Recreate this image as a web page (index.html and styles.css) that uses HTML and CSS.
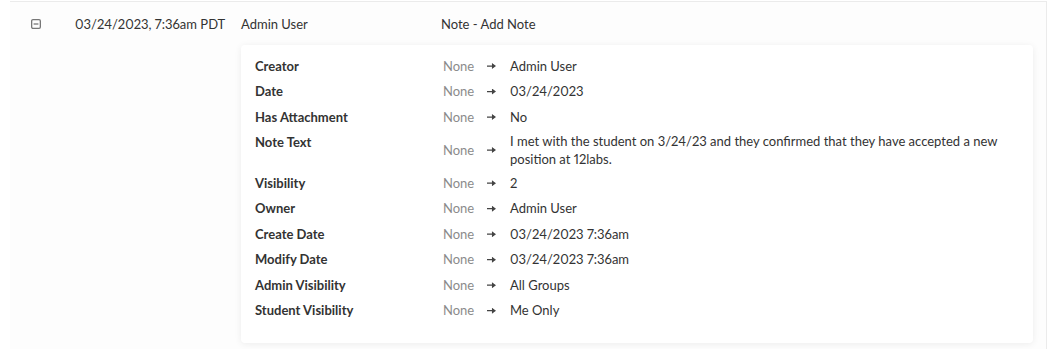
FILE: index.html
```html
<!DOCTYPE html>
<html lang="en">
  <head>
    <meta charset="UTF-8" />
    <meta name="viewport" content="width=device-width, initial-scale=1.0" />
    <title>Activity log</title>
    <link rel="stylesheet" href="styles.css">
  </head>
  <body>
    <main class="log">
      <div class="entry">
        <div class="summary">
          <button type="button" class="toggle" aria-expanded="true" aria-label="Collapse">
            <svg width="10" height="10" viewBox="0 0 10 10" aria-hidden="true">
              <rect x="0.65" y="0.65" width="8.7" height="8.7" rx="1.3" fill="none" stroke="#777" stroke-width="1.3" />
              <line x1="2.6" y1="5" x2="7.4" y2="5" stroke="#777" stroke-width="1.3" />
            </svg>
          </button>
          <span>03/24/2023, 7:36am PDT</span>
          <span>Admin User</span>
          <span>Note - Add Note</span>
        </div>

        <div class="changes">
          <div class="row">
            <span class="field">Creator</span>
            <span class="old">None</span><span class="arrow"></span>
            <span class="new">Admin User</span>
          </div>
          <div class="row">
            <span class="field">Date</span>
            <span class="old">None</span><span class="arrow"></span>
            <span class="new">03/24/2023</span>
          </div>
          <div class="row">
            <span class="field">Has Attachment</span>
            <span class="old">None</span><span class="arrow"></span>
            <span class="new">No</span>
          </div>
          <div class="row">
            <span class="field">Note Text</span>
            <span class="old">None</span><span class="arrow"></span>
            <span class="new">I met with the student on 3/24/23 and they confirmed that they have accepted a new position at 12labs.</span>
          </div>
          <div class="row">
            <span class="field">Visibility</span>
            <span class="old">None</span><span class="arrow"></span>
            <span class="new">2</span>
          </div>
          <div class="row">
            <span class="field">Owner</span>
            <span class="old">None</span><span class="arrow"></span>
            <span class="new">Admin User</span>
          </div>
          <div class="row">
            <span class="field">Create Date</span>
            <span class="old">None</span><span class="arrow"></span>
            <span class="new">03/24/2023 7:36am</span>
          </div>
          <div class="row">
            <span class="field">Modify Date</span>
            <span class="old">None</span><span class="arrow"></span>
            <span class="new">03/24/2023 7:36am</span>
          </div>
          <div class="row">
            <span class="field">Admin Visibility</span>
            <span class="old">None</span><span class="arrow"></span>
            <span class="new">All Groups</span>
          </div>
          <div class="row">
            <span class="field">Student Visibility</span>
            <span class="old">None</span><span class="arrow"></span>
            <span class="new">Me Only</span>
          </div>
        </div>
      </div>
    </main>
  </body>
</html>
```

FILE: styles.css
```css
/* Global styles */
* {
  margin: 0;
  padding: 0;
  box-sizing: border-box;
}
body {
  color: #333;
  font: 400 13px/18.3px "Lato", "Liberation Sans", sans-serif;
  font-variant-numeric: proportional-nums;
  background: #fff;
}
button {
  border: none;
  font: inherit;
  color: inherit;
  background: none;
}

/* Log container */
.log {
  width: 1037px;
  height: 349px;
  margin: 1px 0 0 10px;
  background-color: #fdfdfd;
  border-top: 1px solid #ebebeb;
  border-right: 1px solid #ebebeb;
}

/*
  [1] Summary row
*/
.summary {
  display: grid;
  align-items: center;
  padding: 13px 0 0 21px;
  grid-template-columns: 44px 166px 200px 1fr;
}
.toggle {
  width: 10px;
  height: 10px;
  display: grid;
  cursor: pointer;
}

/*
  [2] Changes card
*/
.changes {
  width: 792px;
  margin: 12px 0 0 231px;
  padding: 8px 14px 20px;
  border-radius: 4px;
  background-color: #fff;
  box-shadow: 0 1px 7px rgb(0 0 0 / 7%);
}
.row {
  display: grid;
  align-items: center;
  min-height: 25.5px;
  grid-template-columns: 188px 44px 23px 1fr;
}
.field {
  font-weight: 700;
  align-self: start;
  padding-top: 3.6px;
}
.old {
  color: #8b8b8b;
}
/* small solid-head arrow */
.arrow {
  width: 9px;
  height: 6px;
  background: #444;
  clip-path: polygon(0 40%, 55% 40%, 55% 0, 100% 50%, 55% 100%, 55% 60%, 0 60%);
}
.new {
  padding: 2px 20px 2px 0;
}
```
